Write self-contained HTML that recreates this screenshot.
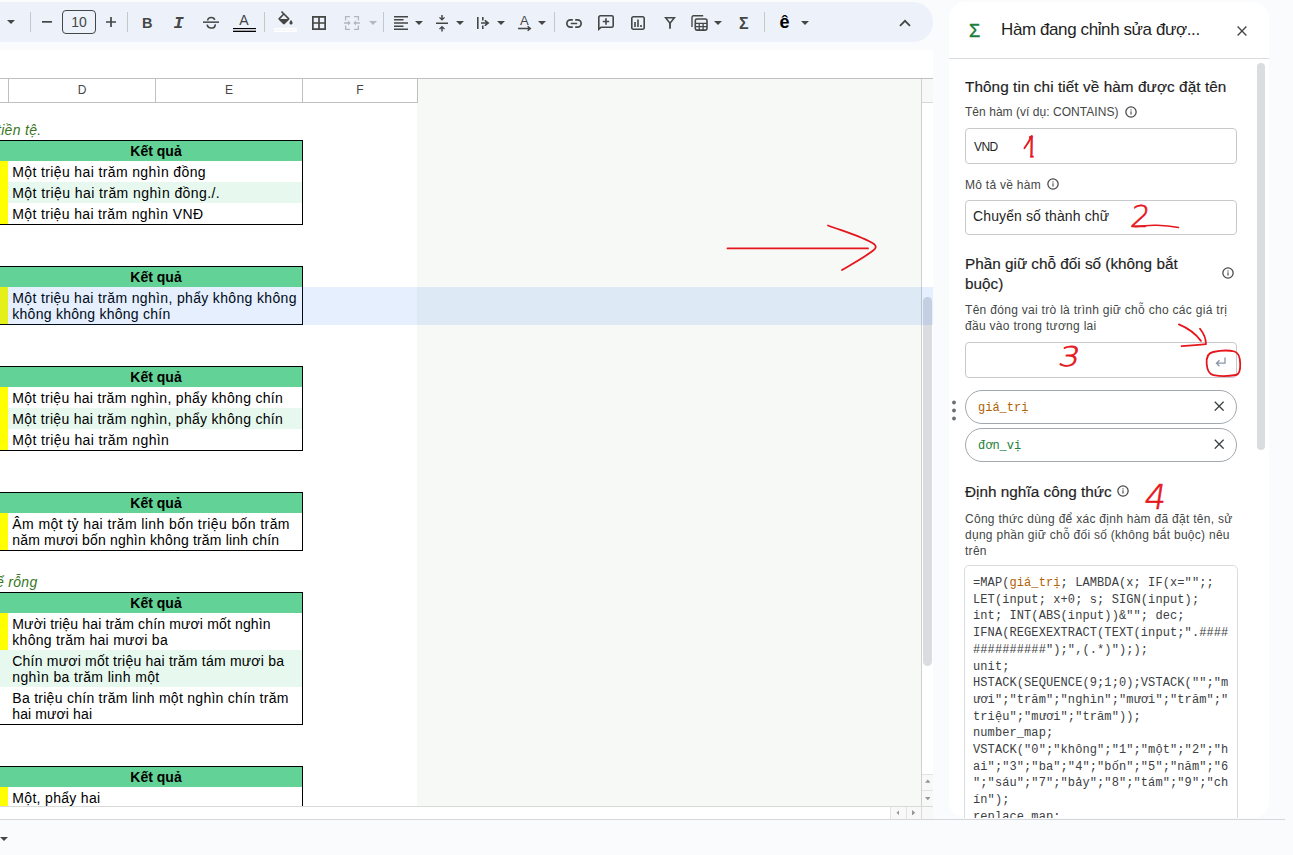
<!DOCTYPE html>
<html lang="vi">
<head>
<meta charset="utf-8">
<title>VND - Hàm được đặt tên</title>
<style>
*{box-sizing:border-box;margin:0;padding:0}
html,body{width:1293px;height:855px;overflow:hidden;background:#f9fbfd}
body{position:relative;font-family:"Liberation Sans",sans-serif;color:#1f1f1f}
.abs{position:absolute}
/* ---------- toolbar ---------- */
#toolbar{position:absolute;left:-30px;top:2px;width:963px;height:40px;background:#edf2fa;border-radius:20px}
.sep{position:absolute;top:12px;width:1px;height:20px;background:#c7c7c7}
.ic{position:absolute;overflow:visible}
.tbt{position:absolute;color:#444746;line-height:1;white-space:nowrap}
#fsize{position:absolute;left:62px;top:10px;width:34px;height:24px;border:1px solid #444746;border-radius:4px;
  font-size:14px;line-height:22px;text-align:center;color:#444746}
/* ---------- sheet ---------- */
#fbar{position:absolute;left:0;top:50px;width:933px;height:28px;background:#fff}
#sheet{position:absolute;left:0;top:78px;width:933px;height:741px;background:#f7f9f6;overflow:hidden}
#grid{position:absolute;left:0;top:0;width:417px;height:728px;background:#fff}
#colhead{position:absolute;left:0;top:0;width:418px;height:25px;background:#fff;border-top:1px solid #c0c0c0;border-bottom:1px solid #c0c0c0}
#hline{position:absolute;left:0;top:0;width:933px;height:1px;background:#c0c0c0}
.ch{position:absolute;top:0;height:23px;border-right:1px solid #c0c0c0;font-size:12px;line-height:23px;text-align:center;color:#444746}
.cell{position:absolute;font-size:13.33px;line-height:16px;letter-spacing:.62px;color:#000;white-space:nowrap}
.tbl{position:absolute;left:-2px;width:305px;border:1px solid #000;background:#fff;overflow:hidden}
.th{position:absolute;left:0;top:0;width:100%;height:20px;background:#63d297}
.th span{position:absolute;left:10px;width:294px;top:2.300px;text-align:center;font-weight:bold;font-size:14px;line-height:16px;letter-spacing:0;color:#000}
.yl{position:absolute;left:0;width:9px;background:#ffff00}
.alt{position:absolute;left:9px;width:300px;background:#e7f9ef}
.tx{position:absolute;left:13.300px;font-size:14px;line-height:16px;letter-spacing:.31px;margin-top:1.200px;color:#000;white-space:nowrap}
.tx2{margin-top:.800px}
.note{position:absolute;font-size:14px;line-height:16px;font-style:italic;color:#38761d;letter-spacing:.3px;margin-top:.800px;white-space:nowrap}
#rowsel{position:absolute;left:0;top:209px;width:933px;height:37.700px;background:rgba(14,101,235,.105);z-index:5}

/* ---------- side panel ---------- */
#panel{position:absolute;left:949px;top:2px;width:320px;height:816px;background:#fff;border-radius:16px;overflow:hidden}
#phead{position:absolute;left:0;top:0;width:320px;height:57px;border-bottom:1px solid #dadce0}
#ptitle{position:absolute;left:52px;top:17px;font-size:17px;line-height:22px;letter-spacing:-.4px;color:#1f1f1f;white-space:nowrap}
.h2{position:absolute;left:16px;font-size:15.300px;letter-spacing:-.080px;line-height:20px;color:#1f1f1f;-webkit-text-stroke:.180px #1f1f1f;white-space:nowrap}
.lbl{position:absolute;left:16px;font-size:12px;line-height:16px;color:#444746;white-space:nowrap}
.inp{position:absolute;left:16px;width:272px;height:35px;border:1px solid #c7c9cc;border-radius:4px;background:#fff}
.inp span{position:absolute;left:8px;white-space:nowrap;color:#1f1f1f}
.chip{position:absolute;left:16px;width:272px;height:34px;border:1px solid #a3a8ae;border-radius:17px;background:#fff}
.chip span{position:absolute;left:12px;top:9px;font-family:"Liberation Mono",monospace;font-size:12px;line-height:16px;white-space:nowrap}
.info{position:absolute;width:12px;height:12px}
#code{position:absolute;left:15px;top:563px;width:274px;height:300px;border:1px solid #dadce0;border-radius:5px;background:#fff}
#code pre{position:absolute;left:8px;top:9px;font-family:"Liberation Mono",monospace;font-size:12px;line-height:16.700px;letter-spacing:.095px;color:#3c4043;white-space:pre}
#pscroll{position:absolute;left:308px;top:61px;width:8px;height:387px;border-radius:4px;background:#dadce0}

/* ---------- scrollbars ---------- */
#vline{position:absolute;left:921px;top:1px;width:1px;height:740px;background:#cfcfcf}
#vtrack{position:absolute;left:922px;top:1px;width:11px;height:728px;background:#fff}
#vtop{position:absolute;left:922px;top:1px;width:11px;height:24px;background:#f8f8f8;border-bottom:1px solid #d9d9d9}
#vthumb{position:absolute;left:923px;top:219px;width:9px;height:369px;border-radius:4.500px;background:#dadce0}
.sbtn{position:absolute;background:#f8f8f8}
#hbar{position:absolute;left:0;top:728px;width:933px;height:13px;background:#fff;border-top:1px solid #d9d9d9}
#botline{position:absolute;left:0;top:818.500px;width:1285px;height:1.300px;background:#d5d7da}
.red{fill:none;stroke:#e6161d;stroke-width:1.800;stroke-linecap:round;stroke-linejoin:round}
.hand{font-family:"DejaVu Sans Light","DejaVu Sans",sans-serif;font-weight:200;fill:#e6161d;stroke:#e6161d;stroke-width:.700px;stroke-linejoin:round}
</style>
</head>
<body>

<!-- ================= TOOLBAR ================= -->
<div id="toolbar"></div>
<div id="tbicons" class="abs" style="left:0;top:0;width:933px;height:44px">
  <!-- font dropdown caret -->
  <svg class="ic" style="left:7px;top:20px" width="8" height="4" viewBox="0 0 8 4"><path d="M0 0h8L4 4z" fill="#444746"/></svg>
  <div class="sep" style="left:30px"></div>
  <!-- minus -->
  <svg class="ic" style="left:42px;top:21.200px" width="10" height="2"><rect width="10" height="1.700" fill="#444746"/></svg>
  <div id="fsize">10</div>
  <!-- plus -->
  <svg class="ic" style="left:106px;top:17px" width="10" height="10" viewBox="0 0 10 10"><path d="M4.150 0h1.700v4.150H10v1.700H5.850V10h-1.700V5.850H0v-1.700h4.150z" fill="#444746"/></svg>
  <div class="sep" style="left:127px"></div>
  <!-- bold / italic / strike / text colour -->
  <div class="tbt" style="left:142px;top:13.500px;font-size:14.500px;font-weight:bold;line-height:18px">B</div>
  <div class="tbt" style="left:173.500px;top:15px;font-size:17px;font-weight:bold;font-style:italic;line-height:18px;font-family:'Liberation Mono',monospace">I</div>
  <svg class="ic" style="left:203px;top:16px" width="16" height="14" viewBox="0 0 16 14"><path fill="none" stroke="#444746" stroke-width="1.650" stroke-linecap="butt" d="M4.700 4.600c0-1.900 1.400-3.100 3.500-3.100 1.900 0 3.200.900 3.500 2.400M4.200 8.700c.2 1.900 1.700 3.300 4 3.300 2.300 0 3.900-1.200 3.900-3.100 0-.200 0-.400-.1-.600"/><rect x="0" y="5.400" width="16" height="1.500" fill="#444746"/></svg>
  <div class="tbt" style="left:239.300px;top:10.800px;font-size:14px;line-height:18px">A</div>
  <svg class="ic" style="left:233px;top:28px" width="23" height="4"><rect width="23" height="4" fill="#000"/><rect y="1.100" width="23" height="1.600" fill="#e9edf5"/></svg>
  <div class="sep" style="left:264px"></div>
  <!-- fill colour -->
  <svg class="ic" style="left:275.500px;top:11px" width="19" height="19" viewBox="0 0 24 24"><path fill="#444746" d="M16.56 8.94 7.62 0 6.21 1.41l2.38 2.38-5.15 5.15a1.49 1.49 0 0 0 0 2.12l5.5 5.5c.29.29.68.44 1.06.44s.77-.15 1.06-.44l5.5-5.5c.59-.58.59-1.53 0-2.12zM5.21 10 10 5.21 14.79 10H5.21zM19 11.5s-2 2.17-2 3.5c0 1.1.9 2 2 2s2-.9 2-2c0-1.330-2-3.5-2-3.500z"/></svg>
  <svg class="ic" style="left:274px;top:28px" width="23" height="4"><rect width="23" height="4" fill="#fff"/><rect y="1.4" width="23" height="1.1" fill="#f1f4fb"/></svg>
  <!-- borders -->
  <svg class="ic" style="left:312px;top:16px" width="14" height="14" viewBox="0 0 14 14"><path fill="none" stroke="#444746" stroke-width="1.7" d="M.85.85h12.3v12.3H.85zM7 .85v12.3M.85 7h12.3"/></svg>
  <!-- merge (disabled) -->
  <svg class="ic" style="left:344px;top:16px" width="16" height="14" viewBox="0 0 16 14"><path fill="none" stroke="#b1b6be" stroke-width="1.300" d="M6 .600H1.600v4M1.600 9.400v4H6M10 .600h4.400v4M14.400 9.400v4H10M0 7h5M16 7h-5"/><path fill="#b1b6be" d="M4 4.500 6.700 7 4 9.500zM12 4.500 9.300 7 12 9.500z"/></svg>
  <svg class="ic" style="left:369px;top:21px" width="8" height="4" viewBox="0 0 8 4"><path d="M0 0h8L4 4z" fill="#b4b9c2"/></svg>
  <div class="sep" style="left:383px"></div>
  <!-- h-align -->
  <svg class="ic" style="left:394px;top:16px" width="14" height="14" viewBox="0 0 14 14"><path fill="#444746" d="M0 0h14v1.500H0zM0 3.100h9.500v1.500H0zM0 6.250h14v1.500H0zM0 9.400h9.500v1.500H0zM0 12.500h14V14H0z"/></svg>
  <svg class="ic" style="left:415px;top:21px" width="8" height="4" viewBox="0 0 8 4"><path d="M0 0h8L4 4z" fill="#444746"/></svg>
  <!-- v-align -->
  <svg class="ic" style="left:436px;top:14.500px" width="12" height="16.500" viewBox="0 0 12 16.500"><path fill="#444746" d="M0 7.500h12V9H0zM5.250 0h1.500v3.200l1.300-1.300.95.950L6 5.850 3 2.850l.95-.95 1.300 1.300zM5.250 16.500h1.500v-3.200l1.300 1.300.95-.95L6 10.650l-3 3 .95.950 1.300-1.300z"/></svg>
  <svg class="ic" style="left:456px;top:21px" width="8" height="4" viewBox="0 0 8 4"><path d="M0 0h8L4 4z" fill="#444746"/></svg>
  <!-- wrap -->
  <svg class="ic" style="left:476.500px;top:17px" width="12.500" height="12" viewBox="0 0 12.500 12"><path fill="#444746" d="M0 0h1.600v12H0zM5 0h1.600v3.400H5zM5 8.600h1.600V12H5zM4 5.250h4.800L7.300 3.700l1-1L12.500 6 8.300 9.300l-1-1 1.500-1.550H4z"/></svg>
  <svg class="ic" style="left:497px;top:21px" width="8" height="4" viewBox="0 0 8 4"><path d="M0 0h8L4 4z" fill="#444746"/></svg>
  <!-- rotate -->
  <div class="tbt" style="left:520px;top:11.500px;font-size:13px;line-height:18px">A</div>
  <svg class="ic" style="left:518px;top:25.500px" width="13.500" height="5" viewBox="0 0 13.500 5"><path fill="#444746" d="M0 1.750h10.300L9.200.65l.9-.9L13.500 2.500 10.100 5.250l-.9-.9 1.100-1.100H0z"/></svg>
  <svg class="ic" style="left:538px;top:21px" width="8" height="4" viewBox="0 0 8 4"><path d="M0 0h8L4 4z" fill="#444746"/></svg>
  <div class="sep" style="left:554px"></div>
  <!-- link -->
  <svg class="ic" style="left:566px;top:18.500px" width="16" height="9" viewBox="0 0 16 9"><path fill="none" stroke="#444746" stroke-width="1.700" d="M6.800.85H4.500a3.650 3.650 0 0 0 0 7.300h2.300M9.200.85h2.300a3.650 3.650 0 0 1 0 7.300H9.200M4.800 4.500h6.400"/></svg>
  <!-- add comment -->
  <svg class="ic" style="left:598px;top:15px" width="16" height="16" viewBox="0 0 16 16"><path fill="none" stroke="#444746" stroke-width="1.600" d="M.8 14.300V2.300a1.500 1.500 0 0 1 1.500-1.500h11.400a1.500 1.500 0 0 1 1.500 1.500v8.400a1.500 1.500 0 0 1-1.500 1.500H3.100zM8 3.300v6.400M4.800 6.500h6.400"/></svg>
  <!-- chart -->
  <svg class="ic" style="left:631px;top:16px" width="14" height="14" viewBox="0 0 14 14"><path fill="none" stroke="#444746" stroke-width="1.600" d="M2.300.8h9.400a1.500 1.500 0 0 1 1.500 1.500v9.400a1.500 1.500 0 0 1-1.500 1.500H2.300a1.500 1.500 0 0 1-1.500-1.500V2.300A1.500 1.500 0 0 1 2.300.8zM4 6v5M7 3.500V11M10 9v2"/></svg>
  <!-- filter -->
  <svg class="ic" style="left:664px;top:17px" width="12" height="12" viewBox="0 0 12 12"><path fill="none" stroke="#444746" stroke-width="1.500" stroke-linejoin="miter" d="M1.600.750h8.800L6 6.300z"/><rect x="5.100" y="5.500" width="1.800" height="6.200" fill="#444746"/></svg>
  <!-- table views -->
  <svg class="ic" style="left:691px;top:15px" width="17" height="16" viewBox="0 0 17 16"><path fill="none" stroke="#444746" stroke-width="1.400" d="M1 12V2.300A1.500 1.500 0 0 1 2.500.800h9.700"/><rect x="4.300" y="4" width="11.700" height="11.100" rx="1.600" fill="none" stroke="#444746" stroke-width="1.600"/><path fill="none" stroke="#444746" stroke-width="1.300" d="M4.300 8.300H16M4.300 11.700H16M8.200 8.300v6.800M12.100 8.300v6.800"/></svg>
  <svg class="ic" style="left:714px;top:21px" width="8" height="4" viewBox="0 0 8 4"><path d="M0 0h8L4 4z" fill="#444746"/></svg>
  <!-- sigma -->
  <div class="tbt" style="left:739px;top:13.500px;font-size:16px;font-weight:bold;line-height:20px">Σ</div>
  <div class="sep" style="left:764px"></div>
  <!-- input tools -->
  <div class="tbt" style="left:779.500px;top:10.500px;font-size:18px;font-weight:bold;line-height:22px;color:#000">ê</div>
  <svg class="ic" style="left:801px;top:21px" width="8" height="4" viewBox="0 0 8 4"><path d="M0 0h8L4 4z" fill="#444746"/></svg>
  <!-- collapse chevron -->
  <svg class="ic" style="left:899px;top:19px" width="12" height="8" viewBox="0 0 12 8"><path fill="none" stroke="#444746" stroke-width="1.800" d="M1 6.800 6 1.800l5 5"/></svg>
</div>
<div id="fbar"></div>

<!-- ================= SHEET ================= -->
<div id="sheet">
  <div id="grid"></div>
  <div class="note" style="left:-3px;top:43px">tiền tệ.</div>
  <div class="tbl" style="top:62px;height:85px">
    <div class="th"><span>Kết quả</span></div>
    <div class="yl" style="top:20px;height:63px"></div>
    <div class="tx" style="top:22px"><span style="display:block;letter-spacing:0.372px">Một triệu hai trăm nghìn đồng</span></div>
    <div class="alt" style="top:41px;height:21px"></div>
    <div class="tx" style="top:43px"><span style="display:block;letter-spacing:0.414px">Một triệu hai trăm nghìn đồng./.</span></div>
    <div class="tx" style="top:64px"><span style="display:block;letter-spacing:0.348px">Một triệu hai trăm nghìn VNĐ</span></div>
    </div>
  <div class="tbl" style="top:188px;height:59px">
    <div class="th"><span>Kết quả</span></div>
    <div class="yl" style="top:20px;height:37px"></div>
    <div class="tx tx2" style="top:22px"><span style="display:block;letter-spacing:0.345px">Một triệu hai trăm nghìn, phẩy không không</span><span style="display:block;letter-spacing:0.259px">không không không chín</span></div>
    </div>
  <div class="tbl" style="top:288px;height:85px">
    <div class="th"><span>Kết quả</span></div>
    <div class="yl" style="top:20px;height:63px"></div>
    <div class="tx" style="top:22px"><span style="display:block;letter-spacing:0.303px">Một triệu hai trăm nghìn, phẩy không chín</span></div>
    <div class="alt" style="top:41px;height:21px"></div>
    <div class="tx" style="top:43px"><span style="display:block;letter-spacing:0.303px">Một triệu hai trăm nghìn, phẩy không chín</span></div>
    <div class="tx" style="top:64px"><span style="display:block;letter-spacing:0.380px">Một triệu hai trăm nghìn</span></div>
    </div>
  <div class="tbl" style="top:414px;height:59px">
    <div class="th"><span>Kết quả</span></div>
    <div class="yl" style="top:20px;height:37px"></div>
    <div class="tx tx2" style="top:22px"><span style="display:block;letter-spacing:0.403px">Âm một tỷ hai trăm linh bốn triệu bốn trăm</span><span style="display:block;letter-spacing:0.164px">năm mươi bốn nghìn không trăm linh chín</span></div>
    </div>
  <div class="note" style="left:-4px;top:495px">ể rỗng</div>
  <div class="tbl" style="top:514px;height:133px">
    <div class="th"><span>Kết quả</span></div>
    <div class="yl" style="top:20px;height:37px"></div>
    <div class="tx tx2" style="top:22px"><span style="display:block;letter-spacing:0.149px">Mười triệu hai trăm chín mươi mốt nghìn</span><span style="display:block;letter-spacing:0.291px">không trăm hai mươi ba</span></div>
    <div class="alt" style="top:57px;height:37px;left:0;width:310px"></div>
    <div class="tx tx2" style="top:59px"><span style="display:block;letter-spacing:0.208px">Chín mươi mốt triệu hai trăm tám mươi ba</span><span style="display:block;letter-spacing:0.362px">nghìn ba trăm linh một</span></div>
    <div class="tx tx2" style="top:96px"><span style="display:block;letter-spacing:0.274px">Ba triệu chín trăm linh một nghìn chín trăm</span><span style="display:block;letter-spacing:0.111px">hai mươi hai</span></div>
    </div>
  <div class="tbl" style="top:688px;height:64px">
    <div class="th"><span>Kết quả</span></div>
    <div class="yl" style="top:20px;height:42px"></div>
    <div class="tx" style="top:22px"><span style="display:block;letter-spacing:0.321px">Một, phẩy hai</span></div>
    <div class="alt" style="top:41px;height:21px"></div>
    <div class="tx" style="top:43px"><span style="display:block"></span></div>
    </div>
  <div id="rowsel"></div>
  <div id="vline"></div>
  <div id="vtrack"></div>
  <div id="vtop"></div>
  <div id="vthumb"></div>
  <div class="sbtn" style="left:922px;top:696px;width:11px;height:32px;border-top:1px solid #e3e3e3"></div>
  <div class="abs" style="left:922px;top:712px;width:11px;height:1px;background:#e3e3e3"></div>
  <svg class="abs" style="left:924.700px;top:701px" width="5.600" height="3.700" viewBox="0 0 6 4"><path d="M0 4h6L3 .500z" fill="#959595"/></svg>
  <svg class="abs" style="left:924.700px;top:718.500px" width="5.600" height="3.700" viewBox="0 0 6 4"><path d="M0 0h6L3 3.500z" fill="#959595"/></svg>
  <div id="hbar">
    <div class="sbtn" style="left:890px;top:0;width:43px;height:12px;border-left:1px solid #e3e3e3"></div>
    <div class="abs" style="left:906px;top:0;width:1px;height:12px;background:#e3e3e3"></div>
    <div class="abs" style="left:921px;top:0;width:1px;height:12px;background:#d9d9d9"></div>
    <svg class="abs" style="left:895.500px;top:2.800px" width="3.700" height="5.600" viewBox="0 0 4 6"><path d="M4 0v6L.500 3z" fill="#959595"/></svg>
    <svg class="abs" style="left:912.300px;top:2.800px" width="3.700" height="5.600" viewBox="0 0 4 6"><path d="M0 0v6l3.500-3z" fill="#959595"/></svg>
  </div>
  <div id="hline"></div>
  <div id="colhead">
    <div class="ch" style="left:0;width:9px"></div>
    <div class="ch" style="left:9px;width:147px">D</div>
    <div class="ch" style="left:156px;width:147px">E</div>
    <div class="ch" style="left:303px;width:115px">F</div>
  </div>
</div>

<!-- ================= SIDE PANEL ================= -->
<div id="panel">
  <div id="phead">
    <div class="abs" style="left:20px;top:16.500px;font-size:18px;line-height:24px;color:#188038;-webkit-text-stroke:.5px #188038">Σ</div>
    <div id="ptitle">Hàm đang chỉnh sửa đượ...</div>
    <svg class="abs" style="left:288px;top:24px" width="10" height="10" viewBox="0 0 10 10"><path fill="none" stroke="#444746" stroke-width="1.350" d="M.600.600l8.800 8.800M9.400.600.600 9.400"/></svg>
  </div>
  <div class="h2" style="top:75px;letter-spacing:.080px">Thông tin chi tiết về hàm được đặt tên</div>
  <div class="lbl" style="top:102px;letter-spacing:.040px">Tên hàm (ví dụ: CONTAINS)</div>
  <svg class="info" style="left:176px;top:103.7px" viewBox="0 0 12 12"><circle cx="6" cy="6" r="5.150" fill="none" stroke="#444746" stroke-width="1.250"/><rect x="5.450" y="5.300" width="1.100" height="3.300" fill="#444746"/><rect x="5.450" y="3.300" width="1.100" height="1.200" fill="#444746"/></svg>
  <div class="inp" style="top:126px;height:36px"><span style="top:10px;font-size:12px;line-height:16px;letter-spacing:-.6px">VND</span></div>
  <div class="lbl" style="top:174.500px;letter-spacing:.270px">Mô tả về hàm</div>
  <svg class="info" style="left:98px;top:176.300px" viewBox="0 0 12 12"><circle cx="6" cy="6" r="5.150" fill="none" stroke="#444746" stroke-width="1.250"/><rect x="5.450" y="5.300" width="1.100" height="3.300" fill="#444746"/><rect x="5.450" y="3.300" width="1.100" height="1.200" fill="#444746"/></svg>
  <div class="inp" style="top:198px;height:35px"><span style="top:5.700px;left:7px;font-size:14px;line-height:18px;letter-spacing:.12px">Chuyển số thành chữ</span></div>
  <div class="h2" style="top:252px;white-space:normal;width:230px;letter-spacing:0">Phần giữ chỗ đối số (không bắt buộc)</div>
  <svg class="info" style="left:273px;top:265px" viewBox="0 0 12 12"><circle cx="6" cy="6" r="5.150" fill="none" stroke="#444746" stroke-width="1.250"/><rect x="5.450" y="5.300" width="1.100" height="3.300" fill="#444746"/><rect x="5.450" y="3.300" width="1.100" height="1.200" fill="#444746"/></svg>
  <div class="lbl" style="top:300px;letter-spacing:.3px">Tên đóng vai trò là trình giữ chỗ cho các giá trị<br>đầu vào trong tương lai</div>
  <div class="inp" style="top:340px;height:36px"></div>
  <svg class="abs" style="left:266.300px;top:355.300px" width="11" height="10" viewBox="0 0 11 10"><path fill="none" stroke="#8a94a6" stroke-width="1.300" d="M10 .500v5.700H1.500M4.500 3.200l-3 3 3 3"/></svg>
  <svg class="abs" style="left:2px;top:397.700px" width="6" height="22" viewBox="0 0 6 22"><circle cx="3" cy="2.500" r="1.900" fill="#6a6e72"/><circle cx="3" cy="10.500" r="1.900" fill="#6a6e72"/><circle cx="3" cy="18.500" r="1.900" fill="#6a6e72"/></svg>
  <div class="chip" style="top:388px"><span style="color:#b06000">giá_trị</span></div>
  <svg class="abs" style="left:264.700px;top:398.800px" width="10.400" height="10.400" viewBox="0 0 11 11"><path fill="none" stroke="#3c4043" stroke-width="1.450" d="M.8.800l9.400 9.400M10.200.800.800 10.200"/></svg>
  <div class="chip" style="top:426px"><span style="color:#188038">đơn_vị</span></div>
  <svg class="abs" style="left:264.700px;top:436.800px" width="10.400" height="10.400" viewBox="0 0 11 11"><path fill="none" stroke="#3c4043" stroke-width="1.450" d="M.8.800l9.400 9.400M10.200.800.800 10.200"/></svg>
  <div class="h2" style="top:480px;letter-spacing:.020px">Định nghĩa công thức</div>
  <svg class="info" style="left:168px;top:482.800px" viewBox="0 0 12 12"><circle cx="6" cy="6" r="5.150" fill="none" stroke="#444746" stroke-width="1.250"/><rect x="5.450" y="5.300" width="1.100" height="3.300" fill="#444746"/><rect x="5.450" y="3.300" width="1.100" height="1.200" fill="#444746"/></svg>
  <div class="lbl" style="top:508.500px;line-height:16px;letter-spacing:.28px">Công thức dùng để xác định hàm đã đặt tên, sử<br>dụng phần giữ chỗ đối số (không bắt buộc) nêu<br>trên</div>
  <div id="code"><pre>=MAP(<span style="color:#b06000">giá_trị</span>; LAMBDA(x; IF(x="";;
LET(input; x+0; s; SIGN(input);
int; INT(ABS(input))&amp;""; dec;
IFNA(REGEXEXTRACT(TEXT(input;".####
##########");",(.*)"););
unit;
HSTACK(SEQUENCE(9;1;0);VSTACK("";"m
ươi";"trăm";"nghìn";"mươi";"trăm";"
triệu";"mươi";"trăm"));
number_map;
VSTACK("0";"không";"1";"một";"2";"h
ai";"3";"ba";"4";"bốn";"5";"năm";"6
";"sáu";"7";"bảy";"8";"tám";"9";"ch
ín");
replace_map;
HSTACK(VSTACK("không mươi";"một mươ
i";"mươi năm";"mươi một"))</pre></div>
  <div id="pscroll"></div>
</div>

<div id="botline"></div>
<svg class="abs" style="left:-.500px;top:836.500px" width="8" height="4" viewBox="0 0 8 4"><path d="M0 0h8L4 4z" fill="#444746"/></svg>

<!-- ================= RED HAND-DRAWN ANNOTATIONS ================= -->
<svg class="abs" style="left:0;top:0;pointer-events:none" width="1293" height="855" viewBox="0 0 1293 855">
  <path class="red" d="M727.500 248.400H868"/>
  <path class="red" d="M828 225.500c16 6 34 11 46 18.500 2.500 1.800 2.300 4.200-.500 6.300-9 7-21 13.500-31.500 19.700"/>
  <path class="red" d="M1178.900 324.400c8.500 3.500 16.500 9 22 16.500"/>
  <path class="red" d="M1200 328.800c4 5 6 10.500 6 15.400-7.500 1-16.500 1.600-24.400 2"/>
  <path class="red" d="M1213 352c-5 1-6.800 6-6.300 12 .500 6 2 10.300 6.800 11.200 6.500 1.200 16 1 22.500-.200 3.300-.600 4.400-5 4.200-11.500-.200-6-1.500-10.800-5.700-12-6.500-1.600-15-.900-21.500.500"/>
  <path class="red" d="M1135 226.700c8-1.200 15-1.700 22-1.500 7.500.200 14.500 1 21.500 2.400" style="stroke-width:1.500"/>
  <clipPath id="c1"><path d="M1029 128h12v26.300h-12zM1030 154h3.600v5h-3.600z"/></clipPath>
  <g clip-path="url(#c1)"><text class="hand" x="1022" y="157" font-size="29" transform="rotate(1 1029 146)">1</text></g>
  <path class="red" d="M1024.400 148.300c2.600-3.600 5.200-8 7.400-12.300" style="stroke-width:1.800"/>
  <text class="hand" x="1131" y="227.500" font-size="30" transform="skewX(-8)" style="transform-origin:1145px 216px">2</text>
  <text class="hand" x="1059.500" y="366.500" font-size="27" transform="skewX(-12) scale(1.220 1)" style="transform-origin:1060px 357px">3</text>
  <text class="hand" x="1145" y="509" font-size="34" transform="skewX(-9)" style="transform-origin:1155px 496px">4</text>
</svg>

</body>
</html>
